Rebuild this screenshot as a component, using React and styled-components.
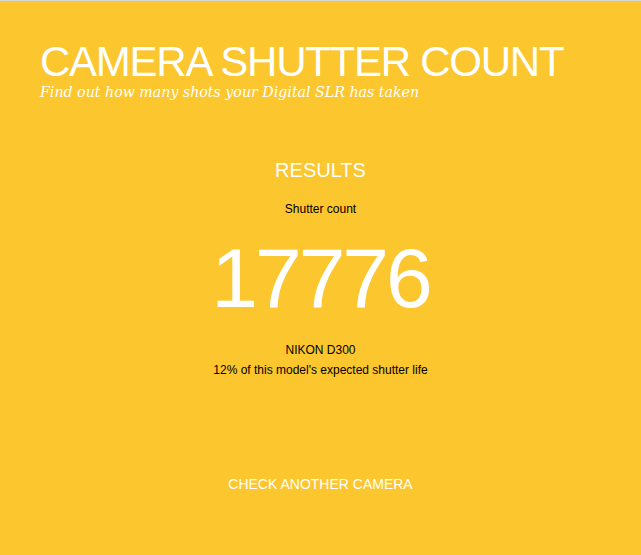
import React from "react";
import styled, { createGlobalStyle } from "styled-components";

const Global = createGlobalStyle`
  html, body { margin: 0; padding: 0; height: 100%; }
  body { background: #fcc62e; font-family: "Liberation Sans", Arial, sans-serif; }
`;

const Page = styled.div`
  min-height: 555px;
  box-sizing: border-box;
  border-top: 1px solid #d8d8d8;
  background: #fcc62e;
  display: flex;
  flex-direction: column;
`;

const Header = styled.header`
  padding: 40px 40px 0;
`;

const Title = styled.h1`
  margin: 0;
  font-weight: normal;
  font-size: 42px;
  line-height: 42px;
  letter-spacing: -1.25px;
  color: #fff;
`;

const Tagline = styled.p`
  margin: 0;
  font-family: "DejaVu Serif", Georgia, serif;
  font-style: italic;
  font-size: 14.2px;
  line-height: 18px;
  color: #fff;
`;

const Results = styled.section`
  display: flex;
  flex-direction: column;
  align-items: center;
  text-align: center;
  margin-top: 57px;
`;

const Heading = styled.h2`
  margin: 0;
  font-weight: normal;
  font-size: 20px;
  line-height: 24px;
  color: #fff;
`;

const Label = styled.div`
  font-size: 12px;
  line-height: 20px;
  color: #000;
  margin-top: ${p => p.$top || 0}px;
`;

const Count = styled.div`
  font-size: 84px;
  line-height: 96px;
  letter-spacing: -3px;
  color: #fff;
  margin-top: 11px;
`;

const Action = styled.a`
  margin-top: 94px;
  font-size: 14px;
  line-height: 20px;
  color: #fff;
  text-decoration: none;
  cursor: pointer;
`;

export default function App() {
  return (
    <>
      <Global />
      <Page>
        <Header>
          <Title>CAMERA SHUTTER COUNT</Title>
          <Tagline>Find out how many shots your Digital SLR has taken</Tagline>
        </Header>
        <Results>
          <Heading>RESULTS</Heading>
          <Label $top={17}>Shutter count</Label>
          <Count>17776</Count>
          <Label $top={14}>NIKON D300</Label>
          <Label>12% of this model's expected shutter life</Label>
          <Action>CHECK ANOTHER CAMERA</Action>
        </Results>
      </Page>
    </>
  );
}
